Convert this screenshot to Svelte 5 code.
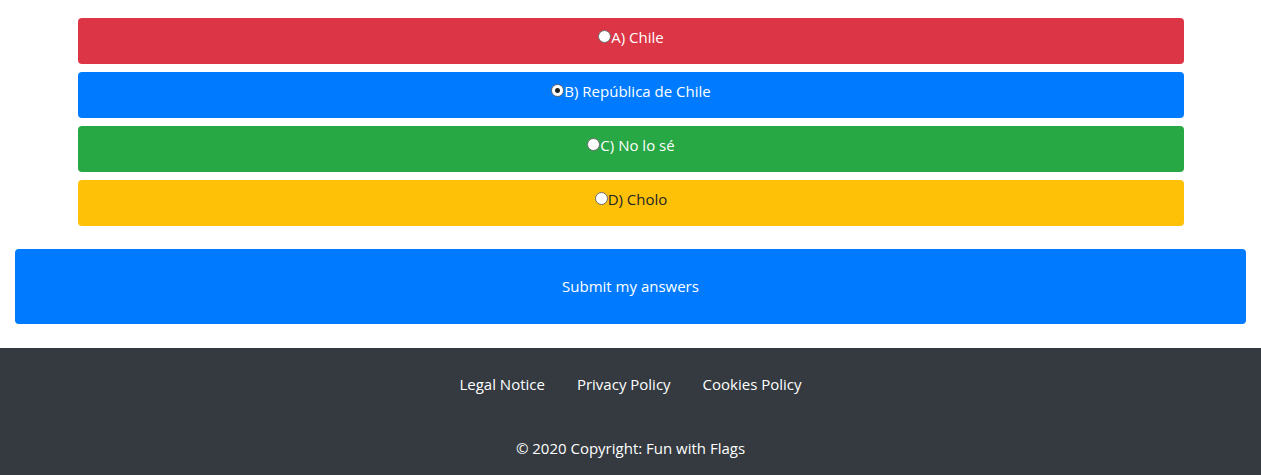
<script>
  let selected = $state('B');
  const answers = [
    { id: 'A', text: 'A) Chile', tone: 'red' },
    { id: 'B', text: 'B) República de Chile', tone: 'blue' },
    { id: 'C', text: 'C) No lo sé', tone: 'green' },
    { id: 'D', text: 'D) Cholo', tone: 'yellow' }
  ];
  const links = ['Legal Notice', 'Privacy Policy', 'Cookies Policy'];
</script>

<form onsubmit={(e) => e.preventDefault()}>
  <div class="answers">
    {#each answers as answer}
      <label class="answer {answer.tone}">
        <input type="radio" name="answer" value={answer.id} bind:group={selected} />
        <span>{answer.text}</span>
      </label>
    {/each}
  </div>
  <button type="submit">Submit my answers</button>
</form>

<footer>
  <nav>
    {#each links as link}
      <a href="#top">{link}</a>
    {/each}
  </nav>
  <p>© 2020 Copyright: Fun with Flags</p>
</footer>

<style>
  :global(body) {
    margin: 0;
    background: #fff;
    font: 15px/24px "Segoe UI", "Open Sans", "Noto Sans", sans-serif;
  }

  form {
    padding: 18px 15px 24px;
  }

  .answers {
    display: grid;
    gap: 8px;
    margin: 0 5%;
    padding-left: 1px;
  }

  .answer {
    display: flex;
    justify-content: center;
    align-items: flex-start;
    box-sizing: border-box;
    min-height: 46px;
    padding: 7px 12px;
    border-radius: 4px;
    color: #fff;
    cursor: pointer;
  }

  .red { background: #dc3545; }
  .blue { background: #007bff; }
  .green { background: #28a745; }
  .yellow { background: #ffc107; color: #212529; }

  input {
    appearance: none;
    box-sizing: border-box;
    flex: none;
    width: 13px;
    height: 13px;
    margin: 5px 0 0;
    border: 1px solid #6b6b6b;
    border-radius: 50%;
    background: #fff;
  }

  input:checked {
    background: radial-gradient(circle, #222 0 2px, #fff 3px);
  }

  button {
    display: block;
    width: 100%;
    margin-top: 23px;
    padding: 25px 12px;
    border: 0;
    border-radius: 4px;
    background: #007bff;
    color: #fff;
    font: inherit;
    line-height: 25px;
    cursor: pointer;
  }

  footer {
    padding: 24px 16px 15px;
    background: #343a40;
    color: #fff;
    text-align: center;
  }

  nav {
    display: flex;
    justify-content: center;
    gap: 32px;
  }

  a {
    color: inherit;
    text-decoration: none;
  }

  p {
    margin: 40px 0 0;
  }
</style>
